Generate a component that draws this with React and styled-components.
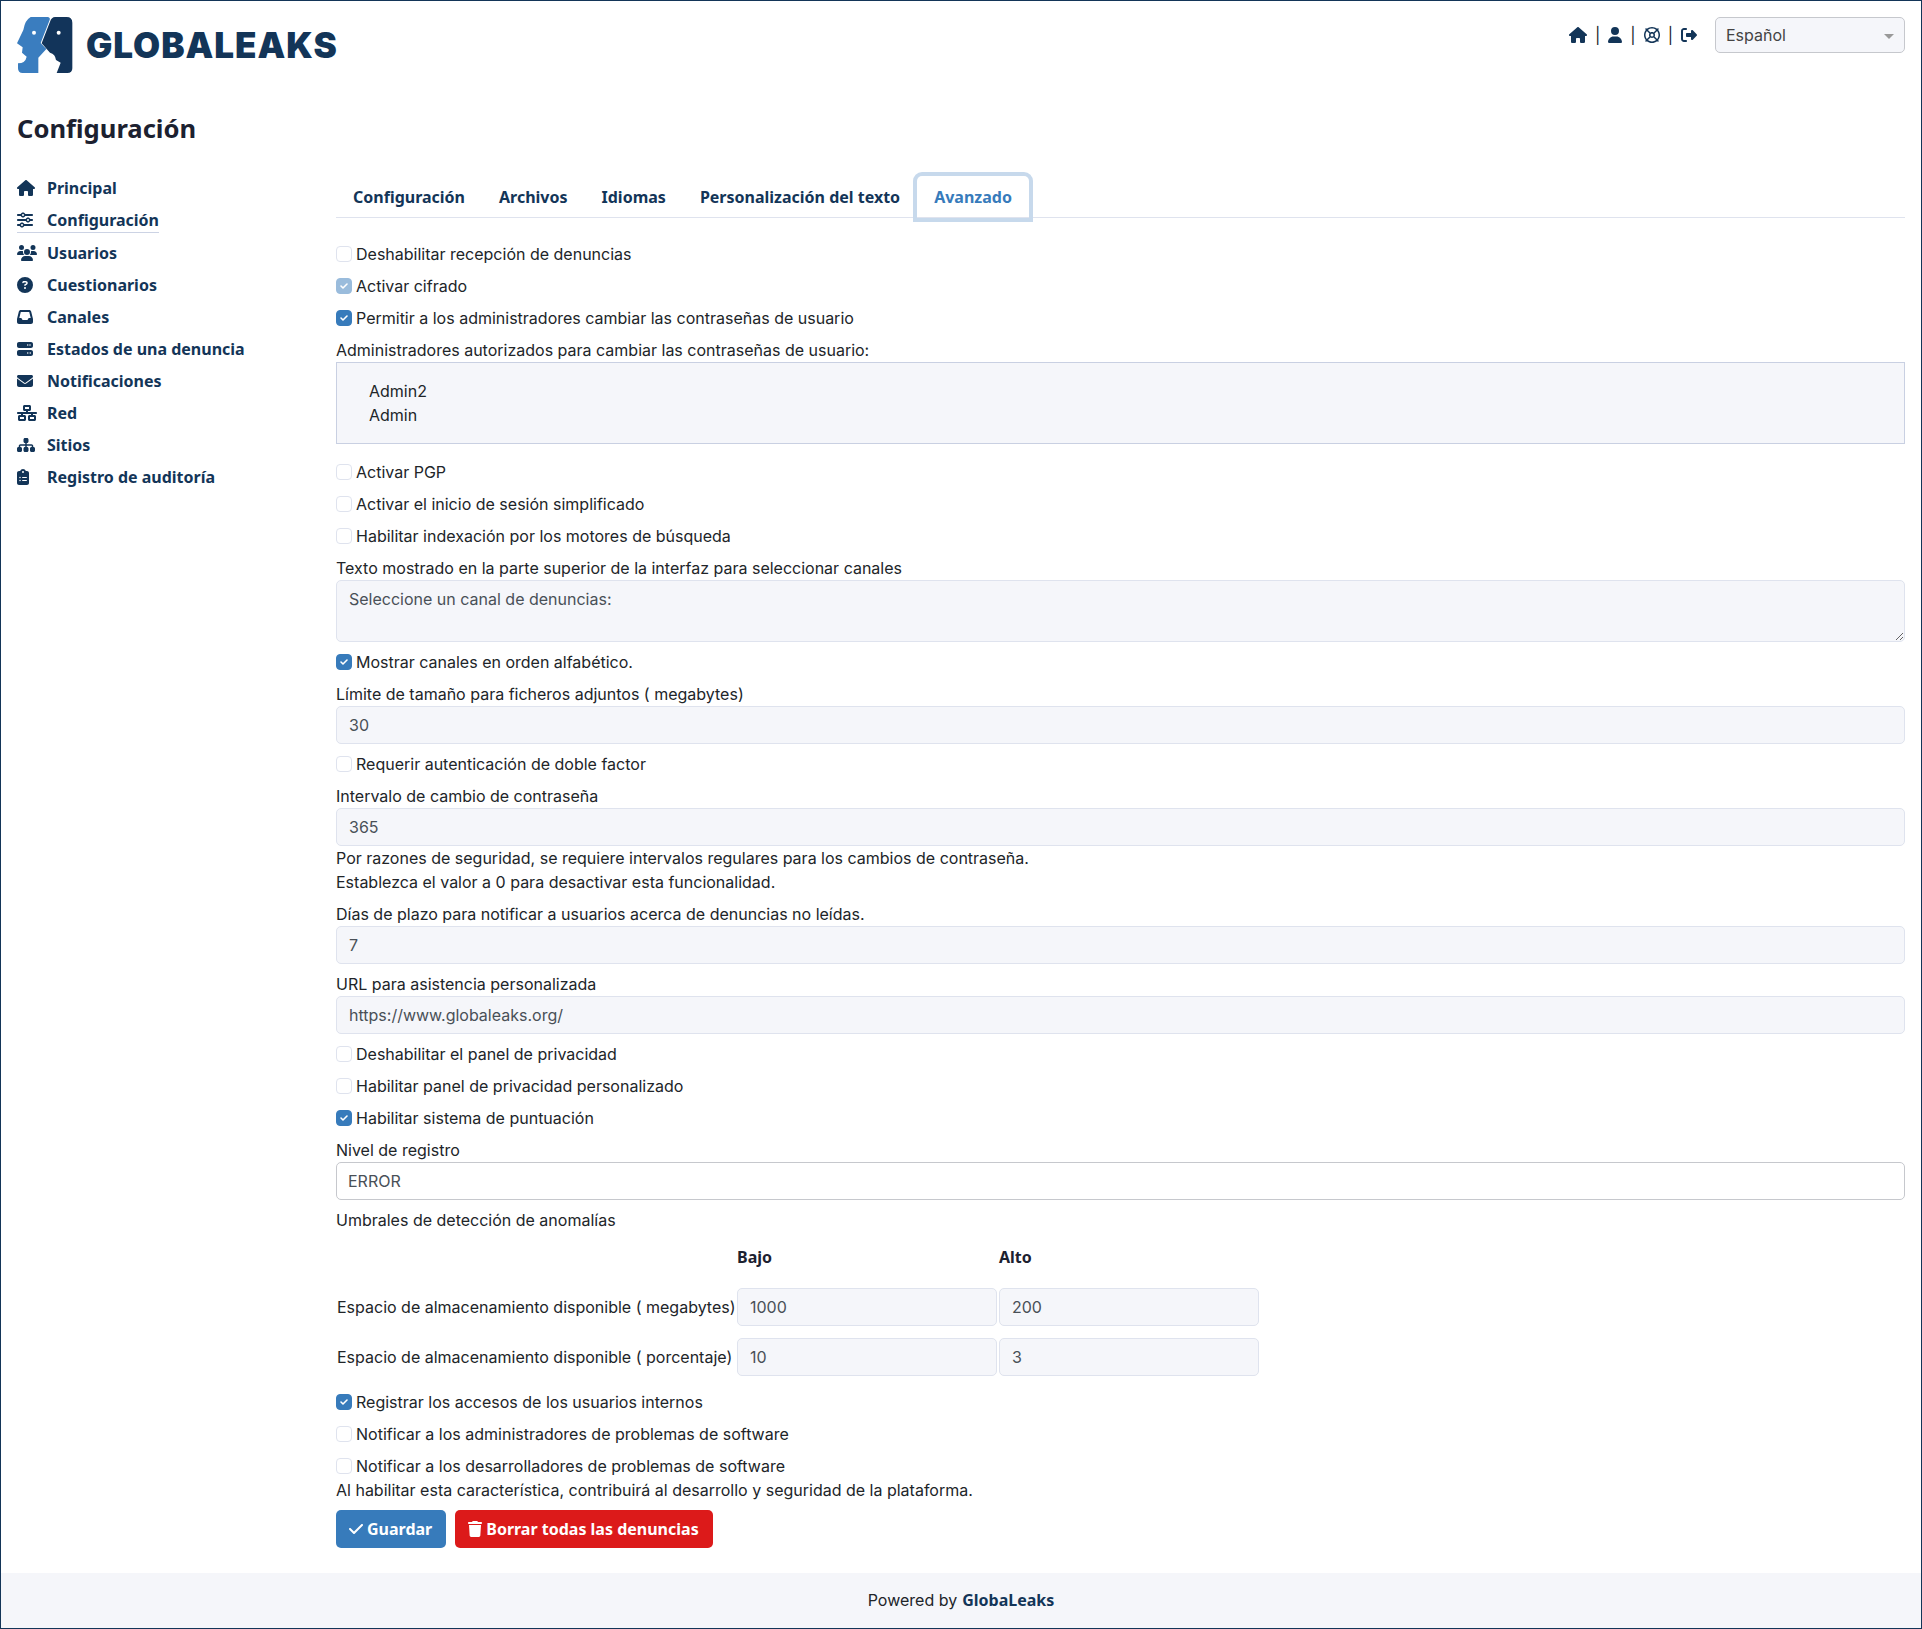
import React from "react";
import styled, { createGlobalStyle } from "styled-components";
import {
  FaHouse, FaSliders, FaUsers, FaCircleQuestion, FaInbox, FaServer, FaEnvelope,
  FaNetworkWired, FaSitemap, FaClipboardList, FaUser, FaRegLifeRing, FaRightFromBracket, FaTrash, FaCheck,
} from "react-icons/fa6";

const NAVY = "#133558";
const BLUE = "#377bbb";
const FIELD = "#f5f6fa";
const LINE = "#dfe3ee";

const Global = createGlobalStyle`
  html, body { margin: 0; padding: 0; background: #fff; }
  body { font-family: Inter, "Liberation Sans", sans-serif; font-size: 16px; line-height: 24px; color: #212529; }
  * { box-sizing: border-box; }
`;

const Page = styled.div`
  min-height: 1629px;
  border: 1px solid ${NAVY};
  display: flex;
  flex-direction: column;
`;
const Header = styled.header`
  display: flex;
  justify-content: space-between;
  align-items: flex-start;
  padding: 16px 16px 0;
  height: 109px;
`;
const Logo = styled.div`
  display: flex;
  align-items: center;
  gap: 13px;
  height: 56px;
`;
const LogoWord = styled.span`
  font-family: Inter, sans-serif;
  font-weight: 900;
  font-size: 35px;
  line-height: 40px;
  letter-spacing: 0.95px;
  color: ${NAVY};
`;
const TopRight = styled.div`
  display: flex;
  align-items: center;
  gap: 18px;
`;
const TopIcons = styled.div`
  display: flex;
  align-items: center;
  gap: 8px;
  color: ${NAVY};
  height: 32px;
`;
const Glyph = styled.span`
  display: flex;
  flex: none;
  width: ${(p) => p.$w}px;
  height: 16px;
  svg { display: block; width: 100%; height: 100%; }
`;
const Sep = styled.span`
  font-size: 16px;
  color: #212529;
`;
const LangSelect = styled.div`
  width: 190px;
  height: 36px;
  border: 1px solid #c6c8cd;
  border-radius: 5px;
  background: ${FIELD};
  color: #444;
  padding: 0 10px;
  display: flex;
  align-items: center;
  justify-content: space-between;
`;
const Caret = styled.span`
  width: 0;
  height: 0;
  border-left: 5px solid transparent;
  border-right: 5px solid transparent;
  border-top: 5px solid #999;
  margin-top: 2px;
`;
const Title = styled.h1`
  margin: 0 16px 19px;
  font-family: "Noto Sans", sans-serif;
  font-weight: 700;
  font-size: 25.6px;
  line-height: 38px;
  color: #1c2130;
  height: 47px;
`;
const Main = styled.main`
  display: flex;
  padding: 0 16px;
  flex: 1;
`;
const Side = styled.nav`
  width: 319px;
  flex: none;
  display: flex;
  flex-direction: column;
  align-items: flex-start;
  gap: 8px;
`;
const NavItem = styled.a`
  display: flex;
  align-items: center;
  height: ${(p) => (p.$active ? "25px" : "24px")};
  border-bottom: ${(p) => (p.$active ? "1px solid #ccd3e4" : "0")};
  font-family: "Noto Sans", sans-serif;
  font-weight: 700;
  font-size: 16px;
  color: ${NAVY};
`;
const NavIcon = styled.span`
  width: 30px;
  display: flex;
  align-items: center;
`;
const Content = styled.section`
  flex: 1;
  min-width: 0;
`;
const Tabs = styled.div`
  display: flex;
  height: 42px;
  border-bottom: 1px solid ${LINE};
  margin-bottom: 24px;
`;
const Tab = styled.div`
  padding: 0 17px;
  font-family: "Noto Sans", sans-serif;
  font-weight: 700;
  font-size: 16px;
  line-height: 42px;
  height: 42px;
  color: ${(p) => (p.$active ? BLUE : NAVY)};
  border-radius: 5px 5px 0 0;
  box-shadow: ${(p) => (p.$active ? "0 0 0 4px #c7d9ec" : "none")};
`;
const Check = styled.label`
  display: flex;
  align-items: center;
  height: 24px;
  margin-bottom: ${(p) => (p.$tight ? "0" : "8px")};
`;
const Box = styled.span`
  width: 16px;
  height: 16px;
  border-radius: 4px;
  margin-right: 4px;
  flex: none;
  border: 1px solid ${(p) => (p.$on ? BLUE : LINE)};
  background: ${(p) => (p.$on ? BLUE : "#fff")};
  opacity: ${(p) => (p.$dim ? 0.5 : 1)};
  display: flex;
  align-items: center;
  justify-content: center;
`;
const Label = styled.div`
  height: 24px;
`;
const Help = styled.div`
  height: 24px;
`;
const Group = styled.div`
  margin-bottom: ${(p) => p.$mb ?? 8}px;
`;
const AdminBox = styled.ul`
  margin: 0 0 16px;
  padding: 16px 16px 16px 32px;
  list-style: none;
  background: ${FIELD};
  border: 1px solid #c9d0e2;
`;
const Field = styled.input`
  display: block;
  width: 100%;
  height: 38px;
  padding: 0 12px;
  font: inherit;
  color: #495057;
  background: ${FIELD};
  border: 1px solid ${LINE};
  border-radius: 5px;
  outline: none;
`;
const Area = styled.textarea`
  display: block;
  width: 100%;
  height: 62px;
  padding: 6px 12px;
  font: inherit;
  color: #495057;
  background: ${FIELD};
  border: 1px solid ${LINE};
  border-radius: 5px;
  outline: none;
`;
const Level = styled.div`
  height: 38px;
  padding: 0 11px;
  display: flex;
  align-items: center;
  color: #495057;
  background: #fff;
  border: 1px solid #c6c8cd;
  border-radius: 5px;
`;
const Thresholds = styled.div`
  display: grid;
  grid-template-columns: 399px 260px 260px;
  column-gap: 2px;
  width: 925px;
  align-items: center;
  margin-bottom: 2px;
`;
const Head = styled.div`
  font-family: "Noto Sans", sans-serif;
  font-weight: 700;
  color: #1c2130;
  height: 56px;
  display: flex;
  align-items: center;
  padding-bottom: 6px;
`;
const RowLabel = styled.div`
  height: 50px;
  display: flex;
  align-items: center;
  padding: 0 0 12px 1px;
  white-space: nowrap;
`;
const Cell = styled.div`
  height: 50px;
  padding-bottom: 12px;
`;
const Actions = styled.div`
  display: flex;
  gap: 9px;
  margin-top: 8px;
`;
const Btn = styled.button`
  height: 38px;
  padding: 0 14px 0 13px;
  border: 0;
  border-radius: 5px;
  display: flex;
  align-items: center;
  gap: 4px;
  color: #fff;
  background: ${(p) => p.$bg};
  font-family: "Noto Sans", sans-serif;
  font-weight: 700;
  font-size: 16px;
`;
const Footer = styled.footer`
  margin-top: 24px;
  height: 55px;
  padding-bottom: 2px;
  background: ${FIELD};
  display: flex;
  align-items: center;
  justify-content: center;
  gap: 5px;
`;
const FooterBrand = styled.span`
  font-family: "Noto Sans", sans-serif;
  font-weight: 700;
  color: ${NAVY};
`;

const Tick = () => (
  <svg width="10" height="10" viewBox="0 0 20 20" fill="none">
    <path d="m4 10 4 4 8-8" stroke="#fff" strokeWidth="3.2" strokeLinecap="round" strokeLinejoin="round" />
  </svg>
);

const Opt = ({ on, dim, tight, children }) => (
  <Check $tight={tight}>
    <Box $on={on} $dim={dim}>{on && <Tick />}</Box>
    {children}
  </Check>
);

const LogoMark = () => (
  <svg width="56" height="56" viewBox="21 21 168 168">
    <path fill="#3a7dbf" d="M62 21H112Q122 22 119 30L92 99 109 117 85 143V189H38Q24 189 24 175V160Q46 160 50 140L36 128 38 112 21 100 40 60Q45 30 62 21Z" />
    <path fill="#12345a" d="M135 21H170Q187 21 187 38V175Q187 189 172 189H140L152 158 138 150Q136 132 120 128L95 100 120 35Q125 21 135 21Z" />
    <circle cx="72" cy="68" r="6" fill="#fff" />
    <circle cx="146" cy="68" r="6" fill="#fff" />
  </svg>
);

const nav = [
  [FaHouse, 18, "Principal"],
  [FaSliders, 16, "Configuración", true],
  [FaUsers, 20, "Usuarios"],
  [FaCircleQuestion, 16, "Cuestionarios"],
  [FaInbox, 16, "Canales"],
  [FaServer, 16, "Estados de una denuncia"],
  [FaEnvelope, 16, "Notificaciones"],
  [FaNetworkWired, 20, "Red"],
  [FaSitemap, 18, "Sitios"],
  [FaClipboardList, 12, "Registro de auditoría"],
];

export default function App() {
  return (
    <Page>
      <Global />
      <Header>
        <Logo>
          <LogoMark />
          <LogoWord>GLOBALEAKS</LogoWord>
        </Logo>
        <TopRight>
          <TopIcons>
            <Glyph $w={18}><FaHouse /></Glyph><Sep>|</Sep>
            <Glyph $w={14}><FaUser /></Glyph><Sep>|</Sep>
            <Glyph $w={16}><FaRegLifeRing /></Glyph><Sep>|</Sep>
            <Glyph $w={16}><FaRightFromBracket /></Glyph>
          </TopIcons>
          <LangSelect>Español<Caret /></LangSelect>
        </TopRight>
      </Header>
      <Title>Configuración</Title>
      <Main>
        <Side>
          {nav.map(([I, w, t, a]) => (
            <NavItem key={t} $active={a}><NavIcon><Glyph $w={w}><I /></Glyph></NavIcon>{t}</NavItem>
          ))}
        </Side>
        <Content>
          <Tabs>
            <Tab>Configuración</Tab>
            <Tab>Archivos</Tab>
            <Tab>Idiomas</Tab>
            <Tab>Personalización del texto</Tab>
            <Tab $active>Avanzado</Tab>
          </Tabs>
          <Opt>Deshabilitar recepción de denuncias</Opt>
          <Opt on dim>Activar cifrado</Opt>
          <Opt on>Permitir a los administradores cambiar las contraseñas de usuario</Opt>
          <Label>Administradores autorizados para cambiar las contraseñas de usuario:</Label>
          <AdminBox><li>Admin2</li><li>Admin</li></AdminBox>
          <Opt>Activar PGP</Opt>
          <Opt>Activar el inicio de sesión simplificado</Opt>
          <Opt>Habilitar indexación por los motores de búsqueda</Opt>
          <Group>
            <Label>Texto mostrado en la parte superior de la interfaz para seleccionar canales</Label>
            <Area readOnly defaultValue="Seleccione un canal de denuncias:" />
          </Group>
          <Opt on>Mostrar canales en orden alfabético.</Opt>
          <Group>
            <Label>Límite de tamaño para ficheros adjuntos ( megabytes)</Label>
            <Field readOnly defaultValue="30" />
          </Group>
          <Opt>Requerir autenticación de doble factor</Opt>
          <Group>
            <Label>Intervalo de cambio de contraseña</Label>
            <Field readOnly defaultValue="365" />
            <Help>Por razones de seguridad, se requiere intervalos regulares para los cambios de contraseña.</Help>
            <Help>Establezca el valor a 0 para desactivar esta funcionalidad.</Help>
          </Group>
          <Group>
            <Label>Días de plazo para notificar a usuarios acerca de denuncias no leídas.</Label>
            <Field readOnly defaultValue="7" />
          </Group>
          <Group>
            <Label>URL para asistencia personalizada</Label>
            <Field readOnly defaultValue="https://www.globaleaks.org/" />
          </Group>
          <Opt>Deshabilitar el panel de privacidad</Opt>
          <Opt>Habilitar panel de privacidad personalizado</Opt>
          <Opt on>Habilitar sistema de puntuación</Opt>
          <Group>
            <Label>Nivel de registro</Label>
            <Level>ERROR</Level>
          </Group>
          <Label>Umbrales de detección de anomalías</Label>
          <Thresholds>
            <span />
            <Head>Bajo</Head>
            <Head>Alto</Head>
            <RowLabel>Espacio de almacenamiento disponible ( megabytes)</RowLabel>
            <Cell><Field readOnly defaultValue="1000" /></Cell>
            <Cell><Field readOnly defaultValue="200" /></Cell>
            <RowLabel>Espacio de almacenamiento disponible ( porcentaje)</RowLabel>
            <Cell><Field readOnly defaultValue="10" /></Cell>
            <Cell><Field readOnly defaultValue="3" /></Cell>
          </Thresholds>
          <Opt on>Registrar los accesos de los usuarios internos</Opt>
          <Opt>Notificar a los administradores de problemas de software</Opt>
          <Opt tight>Notificar a los desarrolladores de problemas de software</Opt>
          <Help>Al habilitar esta característica, contribuirá al desarrollo y seguridad de la plataforma.</Help>
          <Actions>
            <Btn $bg={BLUE}><Glyph $w={14}><FaCheck /></Glyph>Guardar</Btn>
            <Btn $bg="#dc1a1a"><Glyph $w={14}><FaTrash /></Glyph>Borrar todas las denuncias</Btn>
          </Actions>
        </Content>
      </Main>
      <Footer>Powered by <FooterBrand>GlobaLeaks</FooterBrand></Footer>
    </Page>
  );
}
